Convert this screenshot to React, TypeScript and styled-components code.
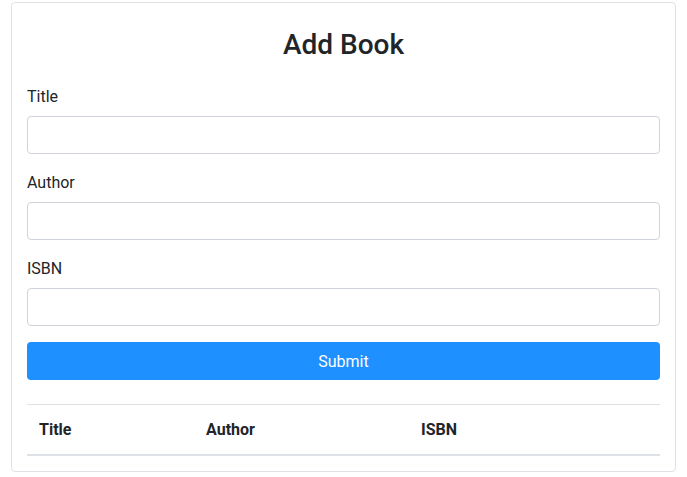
import React from "react";
import styled, { createGlobalStyle } from "styled-components";

const Global = createGlobalStyle`
  html, body { margin: 0; padding: 0; background: #fff; }
  body { font-family: Roboto, "Noto Sans", "Liberation Sans", sans-serif; color: #212529; font-size: 16px; line-height: 1.5; }
  * { box-sizing: border-box; }
`;

const Page = styled.div`
  padding: 2px 11px 0 11px;
`;

const Card = styled.div`
  border: 1px solid #dee2e6;
  border-radius: 4px;
  padding: 15px 15px 15px 15px;
  display: flex;
  flex-direction: column;
`;

const Heading = styled.h2`
  margin: 10px 0 23px;
  font-size: 28px;
  font-weight: 500;
  line-height: 33px;
  text-align: center;
`;

const Form = styled.form`
  display: flex;
  flex-direction: column;
`;

const Group = styled.div`
  display: flex;
  flex-direction: column;
  margin-bottom: 16px;
`;

const Label = styled.label`
  font-size: 16px;
  line-height: 24px;
  margin: 1px 0 7px;
`;

const Input = styled.input`
  height: 38px;
  border: 1px solid #ced4da;
  border-radius: 4px;
  padding: 6px 12px;
  font-size: 16px;
  font-family: inherit;
  outline: none;
`;

const Button = styled.button`
  height: 38px;
  border: none;
  border-radius: 4px;
  background: #1e90ff;
  color: #fff;
  font-family: inherit;
  font-size: 16px;
  cursor: pointer;
`;

const Table = styled.table`
  margin-top: 24px;
  width: 100%;
  border-collapse: collapse;
`;

const Th = styled.th<{ $w: number }>`
  width: ${(p) => p.$w}px;
  text-align: left;
  font-weight: 700;
  padding: 13px 12px 12px;
  line-height: 24px;
  border-top: 1px solid #dee2e6;
  border-bottom: 2px solid #dee2e6;
`;

export default function App() {
  return (
    <>
      <Global />
      <Page>
        <Card>
          <Heading>Add Book</Heading>
          <Form onSubmit={(e) => e.preventDefault()}>
            <Group>
              <Label>Title</Label>
              <Input type="text" />
            </Group>
            <Group>
              <Label>Author</Label>
              <Input type="text" />
            </Group>
            <Group>
              <Label>ISBN</Label>
              <Input type="text" />
            </Group>
            <Button type="submit">Submit</Button>
          </Form>
          <Table>
            <thead>
              <tr>
                <Th $w={167}>Title</Th>
                <Th $w={215}>Author</Th>
                <Th $w={251}>ISBN</Th>
              </tr>
            </thead>
          </Table>
        </Card>
      </Page>
    </>
  );
}
